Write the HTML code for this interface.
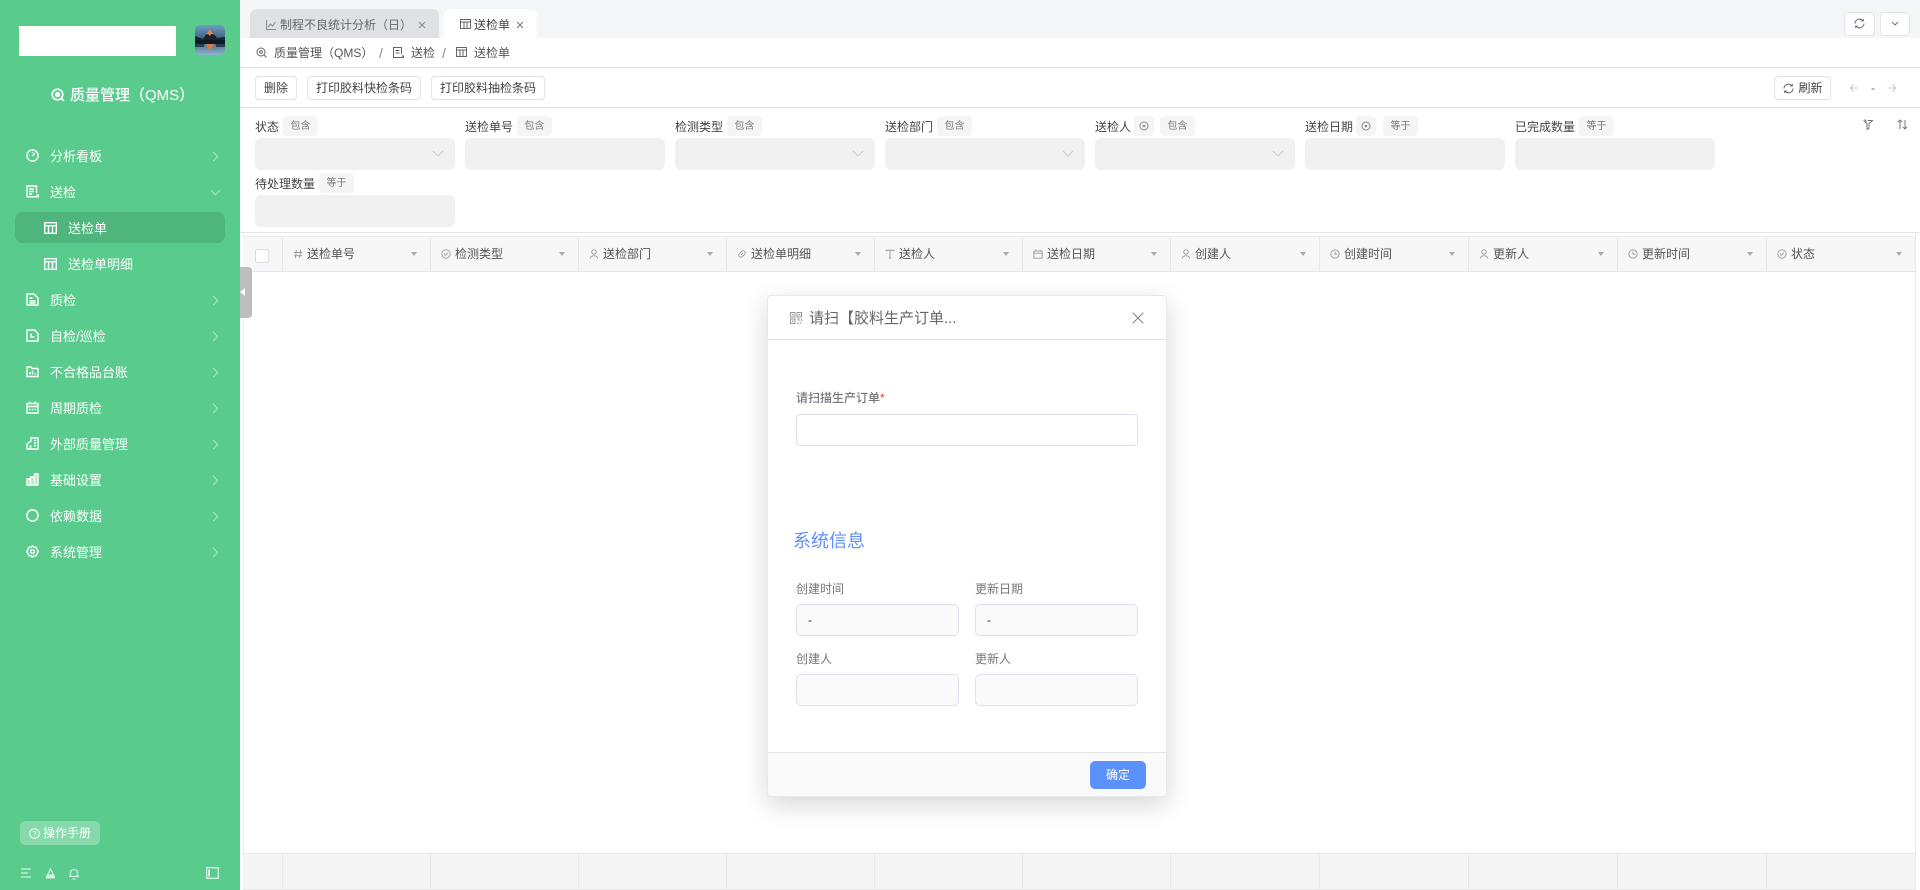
<!DOCTYPE html>
<html lang="zh"><head><meta charset="utf-8"><title>送检单</title>
<style>
*{box-sizing:border-box}
html,body{margin:0;padding:0;width:1920px;height:890px;overflow:hidden;background:#fff;font-family:"Liberation Sans","Noto Sans CJK SC",sans-serif;font-size:12px;color:#444}
.a,.t,svg.i,.c,.btn,.inp,.tag,.d{position:absolute}
.t{line-height:20px;height:20px;white-space:nowrap}
.m{color:#fff;font-size:13px;left:50px}
.s{color:#fff;font-size:13px;left:68px}
.c{left:210px;width:7px;height:7px;border-top:1.4px solid rgba(255,255,255,.5);border-right:1.4px solid rgba(255,255,255,.5);transform:rotate(45deg)}
.btn{background:#fff;border:1px solid #e2e2ea;border-radius:4px;height:24px;line-height:22px;text-align:center;color:#444;font-size:12px}
.tag{height:20px;line-height:22px;background:#f5f5f5;border-radius:4px;text-align:center;color:#777;font-size:10px;width:35px}
.inp{background:#f1f1f1;border-radius:6px;width:200px;height:32px}
.l{font-size:12px;color:#444;margin-top:1px}
.h{position:absolute;top:236px;height:36px;background:#f7f7f7;border-right:1px solid #e8e8e8;border-bottom:1px solid #e8e8e8;border-top:1px solid #ececec}
.h b{position:absolute;right:13px;top:15px;width:0;height:0;border-left:3.5px solid transparent;border-right:3.5px solid transparent;border-top:4px solid #aaa}
.h span{position:absolute;left:24px;top:7px;line-height:20px;font-size:12px;color:#555;font-weight:400;white-space:nowrap}
.h svg{position:absolute;left:10px;top:12px;width:10px;height:10px;fill:none;stroke:#999;stroke-width:1.1}
.f{position:absolute;top:853px;height:37px;background:#f5f5f5;border-right:1px solid #e8e8e8;border-top:1px solid #e8e8e8;border-bottom:1px solid #e8e8e8}
.g{font-size:12px;color:#777}
.fi{position:absolute;background:#fafafa;border:1px solid #e0e0ea;border-radius:5px;width:163px;height:32px;line-height:30px;padding-left:11px;color:#333}
svg.i{fill:none;stroke:#fff;stroke-width:1.2}
</style></head><body>

<!-- sidebar -->
<div class="a" style="left:0;top:0;width:240px;height:890px;background:#59cb8c"></div>
<div class="a" style="left:19px;top:26px;width:157px;height:30px;background:#fff"></div>
<svg class="a" style="left:195px;top:25px" width="30" height="30" viewBox="0 0 30 30"><defs><clipPath id="cp"><rect width="30" height="30" rx="5"/></clipPath><linearGradient id="sky" x1="0" y1="0" x2="0" y2="1"><stop offset="0" stop-color="#6f9fc4"/><stop offset=".5" stop-color="#3a5b78"/><stop offset="1" stop-color="#8fb4cf"/></linearGradient></defs><g clip-path="url(#cp)"><rect width="30" height="30" fill="url(#sky)"/><path d="M0 11L8 14 15 4 22 13 30 12V16H0Z" fill="#14242f"/><path d="M11 9.5L15 4 19 9.5 16 9 15 11 13 9Z" fill="#e9854f"/><rect y="15" width="30" height="4" fill="#0e1a24"/><path d="M11 19L19 19 15 26Z" fill="#d97a46"/><rect y="19" x="0" width="9" height="3" fill="#2a3f50"/><rect y="19" x="21" width="9" height="3" fill="#2a3f50"/></g></svg>

<svg class="i" style="left:51px;top:88px;stroke-width:1.6" width="14" height="14" viewBox="0 0 14 14"><circle cx="6.5" cy="6.5" r="5.3"/><circle cx="6.5" cy="6.5" r="1.8" fill="#fff"/><path d="M10.5 10.5L13 13"/></svg>
<div class="t" style="left:70px;top:86px;color:#fff;font-size:15px;font-weight:500">质量管理（QMS）</div>

<svg class="i" style="left:26px;top:149px;stroke-width:1.4" width="13" height="13" viewBox="0 0 13 13"><circle cx="6.5" cy="6.5" r="5.6"/><path d="M6.5 7L9 4M3.2 6.5H4M6.5 3V3.8"/></svg>
<div class="t m" style="top:147px">分析看板</div><div class="c" style="top:153px"></div>

<svg class="i" style="left:26px;top:185px;stroke-width:1.4" width="13" height="13" viewBox="0 0 13 13"><path d="M10.5 11.8H1V1h9.5V8M3 4H8M3 6.5H8M3 9H6M10.5 10H12.5V11.8H10.5"/></svg>
<div class="t m" style="top:183px">送检</div><div class="c" style="top:187px;left:212px;transform:rotate(135deg)"></div>

<div class="a" style="left:15px;top:212px;width:210px;height:31px;background:#4eb57d;border-radius:8px"></div>
<svg class="i" style="left:44px;top:222px;stroke-width:1.4" width="13" height="12" viewBox="0 0 13 12"><path d="M.7.7H12.3V11.3H.7ZM.7 3.7H12.3M4.5 3.7V11.3M8.5 3.7V11.3"/></svg>
<div class="t s" style="top:219px">送检单</div>
<svg class="i" style="left:44px;top:258px;stroke-width:1.4" width="13" height="12" viewBox="0 0 13 12"><path d="M.7.7H12.3V11.3H.7ZM.7 3.7H12.3M4.5 3.7V11.3M8.5 3.7V11.3"/></svg>
<div class="t s" style="top:255px">送检单明细</div>

<svg class="i" style="left:26px;top:293px;stroke-width:1.4" width="13" height="13" viewBox="0 0 13 13"><path d="M1 1H8L12 5V12H1ZM3.5 5H6.5M3.5 8H9.5M3.5 10H9.5"/></svg>
<div class="t m" style="top:291px">质检</div><div class="c" style="top:297px"></div>

<svg class="i" style="left:26px;top:329px;stroke-width:1.4" width="13" height="13" viewBox="0 0 13 13"><path d="M1 1H8.5L12 4.5V12H1ZM5 4.5V8H8.5"/></svg>
<div class="t m" style="top:327px">自检/巡检</div><div class="c" style="top:333px"></div>

<svg class="i" style="left:26px;top:365px;stroke-width:1.4" width="13" height="13" viewBox="0 0 13 13"><path d="M1 2H5L6 3.5H12V11.5H1ZM4 9.5V7M6.5 9.5V5.5M9 9.5V8"/></svg>
<div class="t m" style="top:363px">不合格品台账</div><div class="c" style="top:369px"></div>

<svg class="i" style="left:26px;top:401px;stroke-width:1.4" width="13" height="13" viewBox="0 0 13 13"><path d="M1 2.5H12V12H1ZM1 5.5H12M4 .5V3.5M9 .5V3.5M3 8.5H4.5M5.8 8.5H7.3M8.6 8.5H10"/></svg>
<div class="t m" style="top:399px">周期质检</div><div class="c" style="top:405px"></div>

<svg class="i" style="left:26px;top:437px;stroke-width:1.4" width="13" height="13" viewBox="0 0 13 13"><path d="M5 1H12V12H1V7L5 4ZM3.5 9H5.5M3.5 11H5.5M8 3.5H10M8 6H10M8 8.5H10"/></svg>
<div class="t m" style="top:435px">外部质量管理</div><div class="c" style="top:441px"></div>

<svg class="i" style="left:26px;top:473px;stroke-width:1.4" width="13" height="13" viewBox="0 0 13 13"><path d="M1 6H4.5V12H1ZM4.5 4H8.5V12H4.5ZM8.5 1H12V12H8.5Z" fill="rgba(255,255,255,.55)"/></svg>
<div class="t m" style="top:471px">基础设置</div><div class="c" style="top:477px"></div>

<svg class="i" style="left:26px;top:509px;stroke-width:1.5" width="13" height="13" viewBox="0 0 13 13"><circle cx="6.5" cy="6.5" r="5.6"/></svg>
<div class="t m" style="top:507px">依赖数据</div><div class="c" style="top:513px"></div>

<svg class="i" style="left:26px;top:545px;stroke-width:1.4" width="13" height="13" viewBox="0 0 13 13"><path d="M6.5.8L8 2.3H10.3L10.9 4.5 12.4 6.5 10.9 8.5 10.3 10.7H8L6.5 12.2 5 10.7H2.7L2.1 8.5.6 6.5 2.1 4.5 2.7 2.3H5Z"/><circle cx="6.5" cy="6.5" r="1.9"/></svg>
<div class="t m" style="top:543px">系统管理</div><div class="c" style="top:549px"></div>

<div class="a" style="left:20px;top:821px;width:80px;height:24px;background:rgba(255,255,255,.28);border-radius:5px"></div>
<svg class="i" style="left:29px;top:828px;opacity:.75" width="11" height="11" viewBox="0 0 11 11"><circle cx="5.5" cy="5.5" r="4.8"/><path d="M4.2 4.2C4.4 2.8 6.8 2.8 6.8 4.4 6.8 5.4 5.5 5.4 5.5 6.5M5.5 7.6V8.5"/></svg>
<div class="t" style="left:43px;top:823px;color:#fff;font-size:12px">操作手册</div>

<svg class="i" style="left:21px;top:868px;opacity:.75" width="11" height="10" viewBox="0 0 11 10"><path d="M0 1H10M0 5H7M0 9H10"/></svg>
<svg class="i" style="left:45px;top:868px;opacity:.75" width="11" height="11" viewBox="0 0 11 11"><path d="M5.5 1L8.5 7H2.5Z"/><path d="M1 7.5H10V10.5H1Z" fill="#fff" stroke="none"/></svg>
<svg class="i" style="left:68px;top:867px;opacity:.75" width="12" height="13" viewBox="0 0 12 13"><path d="M1 9.5H11M2.5 9.5V5.5C2.5 1.5 9.5 1.5 9.5 5.5V9.5M4.5 12H7.5"/></svg>
<svg class="i" style="left:206px;top:867px;opacity:.75;stroke-width:1.3" width="13" height="12" viewBox="0 0 13 12"><path d="M.7.7H12.3V11.3H.7Z"/><path d="M3 2.5V9.5" stroke-width="2"/></svg>

<!-- tab bar -->
<div class="a" style="left:240px;top:0;width:1680px;height:38px;background:#f5f6f8"></div>
<div class="a" style="left:250px;top:9px;width:189px;height:29px;background:#e0e1e4;border-radius:7px 7px 0 0"></div>
<svg class="i" style="left:266px;top:20px;stroke:#888;stroke-width:1" width="10" height="10" viewBox="0 0 10 10"><path d="M.5 0V9.5H10M2 7L4.5 4 6.5 6 9.5 2"/></svg>
<div class="t" style="left:280px;top:15px;color:#666;font-size:12px">制程不良统计分析（日）</div>
<svg class="i" style="left:418px;top:21px;stroke:#888;stroke-width:1" width="8" height="8" viewBox="0 0 8 8"><path d="M1 1L7 7M7 1L1 7"/></svg>
<div class="a" style="left:444px;top:9px;width:93px;height:29px;background:#fff;border-radius:7px 7px 0 0"></div>
<svg class="i" style="left:460px;top:19px;stroke:#666;stroke-width:1" width="11" height="10" viewBox="0 0 11 10"><path d="M.5.5H10.5V9.5H.5ZM.5 3H10.5M4 3V9.5M7 3V9.5"/></svg>
<div class="t" style="left:474px;top:15px;color:#444;font-size:12px">送检单</div>
<svg class="i" style="left:516px;top:21px;stroke:#777;stroke-width:1" width="8" height="8" viewBox="0 0 8 8"><path d="M1 1L7 7M7 1L1 7"/></svg>
<div class="btn" style="left:1844px;top:12px;width:31px;height:24px"></div>
<svg class="i" style="left:1854px;top:18px;stroke:#777;stroke-width:1.1" width="11" height="11" viewBox="0 0 11 11"><path d="M1 5.5A4.5 4.5 0 0 1 9 2.8M10 5.5A4.5 4.5 0 0 1 2 8.2M9.3 1V3H7.3M1.7 10V8H3.7"/></svg>
<div class="btn" style="left:1880px;top:12px;width:30px;height:24px"></div>
<svg class="i" style="left:1891px;top:21px;stroke:#777;stroke-width:1.1" width="8" height="6" viewBox="0 0 8 6"><path d="M1 1L4 4 7 1"/></svg>

<!-- breadcrumb -->
<svg class="i" style="left:256px;top:47px;stroke:#666;stroke-width:1" width="11" height="11" viewBox="0 0 11 11"><circle cx="5" cy="5" r="4"/><circle cx="5" cy="5" r="1.4"/><path d="M8 8L10.5 10.5"/></svg>
<div class="t" style="left:274px;top:43px;font-size:12px;color:#555">质量管理（QMS）</div>
<div class="t" style="left:379px;top:43px;font-size:14px;color:#888">/</div>
<svg class="i" style="left:393px;top:47px;stroke:#666;stroke-width:1" width="11" height="11" viewBox="0 0 11 11"><path d="M8.5 10.5H.5V.5H8.5V7M2.5 3.5H6.5M2.5 6H6.5M8.5 9H10.5V10.5H8.5"/></svg>
<div class="t" style="left:411px;top:43px;font-size:12px;color:#555">送检</div>
<div class="t" style="left:442px;top:43px;font-size:14px;color:#888">/</div>
<svg class="i" style="left:456px;top:47px;stroke:#666;stroke-width:1" width="11" height="10" viewBox="0 0 11 10"><path d="M.5.5H10.5V9.5H.5ZM.5 3H10.5M4 3V9.5M7 3V9.5"/></svg>
<div class="t" style="left:474px;top:43px;font-size:12px;color:#555">送检单</div>
<div class="a" style="left:240px;top:67px;width:1680px;height:1px;background:#e4e4e8"></div>

<!-- toolbar -->
<div class="btn" style="left:255px;top:76px;width:42px">删除</div>
<div class="btn" style="left:307px;top:76px;width:114px">打印胶料快检条码</div>
<div class="btn" style="left:431px;top:76px;width:114px">打印胶料抽检条码</div>
<div class="btn" style="left:1774px;top:76px;width:57px;padding-left:16px">刷新</div>
<svg class="i" style="left:1783px;top:83px;stroke:#666;stroke-width:1" width="11" height="11" viewBox="0 0 11 11"><path d="M1 5.5A4.5 4.5 0 0 1 9 2.8M10 5.5A4.5 4.5 0 0 1 2 8.2M9.3 1V3H7.3M1.7 10V8H3.7"/></svg>
<svg class="i" style="left:1849px;top:83px;stroke:#ccc;stroke-width:1.1" width="10" height="10" viewBox="0 0 10 10"><path d="M9 5H1M4.5 1.5L1 5 4.5 8.5"/></svg>
<div class="t" style="left:1871px;top:78px;color:#666">-</div>
<svg class="i" style="left:1887px;top:83px;stroke:#ccc;stroke-width:1.1" width="10" height="10" viewBox="0 0 10 10"><path d="M1 5H9M5.5 1.5L9 5 5.5 8.5"/></svg>
<div class="a" style="left:240px;top:107px;width:1680px;height:1px;background:#e4e4e8"></div>

<!-- filters row 1 -->
<div class="t l" style="left:255px;top:116px">状态</div><div class="tag" style="left:283px;top:116px">包含</div><div class="inp" style="left:255px;top:138px"></div>
<svg class="i" style="left:432px;top:150px;stroke:#ccc;stroke-width:1" width="12" height="7" viewBox="0 0 12 7"><path d="M1 1L6 6 11 1"/></svg>
<div class="t l" style="left:465px;top:116px">送检单号</div><div class="tag" style="left:517px;top:116px">包含</div><div class="inp" style="left:465px;top:138px"></div>
<div class="t l" style="left:675px;top:116px">检测类型</div><div class="tag" style="left:727px;top:116px">包含</div><div class="inp" style="left:675px;top:138px"></div>
<svg class="i" style="left:852px;top:150px;stroke:#ccc;stroke-width:1" width="12" height="7" viewBox="0 0 12 7"><path d="M1 1L6 6 11 1"/></svg>
<div class="t l" style="left:885px;top:116px">送检部门</div><div class="tag" style="left:937px;top:116px">包含</div><div class="inp" style="left:885px;top:138px"></div>
<svg class="i" style="left:1062px;top:150px;stroke:#ccc;stroke-width:1" width="12" height="7" viewBox="0 0 12 7"><path d="M1 1L6 6 11 1"/></svg>
<div class="t l" style="left:1095px;top:116px">送检人</div><div class="tag" style="left:1134px;top:116px;width:20px"></div>
<svg class="i" style="left:1139px;top:121px;stroke:#888;stroke-width:1" width="10" height="10" viewBox="0 0 10 10"><circle cx="5" cy="5" r="4"/><circle cx="5" cy="5" r=".8" fill="#888"/></svg>
<div class="tag" style="left:1160px;top:116px">包含</div><div class="inp" style="left:1095px;top:138px"></div>
<svg class="i" style="left:1272px;top:150px;stroke:#ccc;stroke-width:1" width="12" height="7" viewBox="0 0 12 7"><path d="M1 1L6 6 11 1"/></svg>
<div class="t l" style="left:1305px;top:116px">送检日期</div><div class="tag" style="left:1356px;top:116px;width:20px"></div>
<svg class="i" style="left:1361px;top:121px;stroke:#888;stroke-width:1" width="10" height="10" viewBox="0 0 10 10"><circle cx="5" cy="5" r="4"/><circle cx="5" cy="5" r=".8" fill="#888"/></svg>
<div class="tag" style="left:1383px;top:116px">等于</div><div class="inp" style="left:1305px;top:138px"></div>
<div class="t l" style="left:1515px;top:116px">已完成数量</div><div class="tag" style="left:1579px;top:116px">等于</div><div class="inp" style="left:1515px;top:138px"></div>
<svg class="i" style="left:1863px;top:119px;stroke:#777;stroke-width:1" width="10" height="11" viewBox="0 0 10 11"><path d="M.5 1.5L4 4.5V10.5L6 9.5V4.5L9.5 1.5H4.5M1.5.5L3.5 2.5"/></svg>
<svg class="i" style="left:1897px;top:119px;stroke:#777;stroke-width:1" width="11" height="11" viewBox="0 0 11 11"><path d="M3 10V1M.8 3.2L3 1 5.2 3.2M8 1V10M5.8 7.8L8 10 10.2 7.8"/></svg>
<!-- filters row 2 -->
<div class="t l" style="left:255px;top:173px">待处理数量</div><div class="tag" style="left:319px;top:173px">等于</div><div class="inp" style="left:255px;top:195px"></div>

<div class="a" style="left:240px;top:232px;width:1680px;height:1px;background:#e4e4e4"></div>

<!-- table frame -->
<div class="a" style="left:243px;top:233px;width:1px;height:657px;background:#ececec"></div>
<div class="a" style="left:1915px;top:233px;width:1px;height:657px;background:#ececec"></div>

<!-- table header -->
<div class="h" style="left:243px;width:40px"></div>
<div class="a" style="left:255px;top:249px;width:14px;height:14px;border:1px solid #dcdce4;border-radius:2px;background:#fff"></div>

<div class="h" style="left:283px;width:148px"><svg viewBox="0 0 12 12"><path d="M4 1L3 11M9 1L8 11M1 4.2H11M1 8H11"/></svg><span>送检单号</span><b></b></div>
<div class="h" style="left:431px;width:148px"><svg viewBox="0 0 12 12"><circle cx="6" cy="6" r="5"/><path d="M3.8 6L5.4 7.6 8.2 4.6"/></svg><span>检测类型</span><b></b></div>
<div class="h" style="left:579px;width:148px"><svg viewBox="0 0 12 12"><circle cx="6" cy="3.5" r="2.7"/><path d="M1.5 11.5C1.5 7 10.5 7 10.5 11.5"/></svg><span>送检部门</span><b></b></div>
<div class="h" style="left:727px;width:148px"><svg viewBox="0 0 12 12"><path d="M5 7L7 5M4 4.5L5.5 3C8 .5 11.5 4 9 6.5L7.5 8M8 7.5L6.5 9C4 11.5.5 8 3 5.5L4.5 4"/></svg><span>送检单明细</span><b></b></div>
<div class="h" style="left:875px;width:148px"><svg viewBox="0 0 12 12"><path d="M1.5 3V1.5H10.5V3M6 1.5V11M4.5 11H7.5"/></svg><span>送检人</span><b></b></div>
<div class="h" style="left:1023px;width:148px"><svg viewBox="0 0 12 12"><path d="M1 2.5H11V11H1ZM1 5H11M3.5 .5V3M8.5 .5V3"/></svg><span>送检日期</span><b></b></div>
<div class="h" style="left:1171px;width:149px"><svg viewBox="0 0 12 12"><circle cx="6" cy="3.5" r="2.7"/><path d="M1.5 11.5C1.5 7 10.5 7 10.5 11.5"/></svg><span>创建人</span><b></b></div>
<div class="h" style="left:1320px;width:149px"><svg viewBox="0 0 12 12"><circle cx="6" cy="6" r="5"/><path d="M6 2.8V6.2H8.8"/></svg><span>创建时间</span><b></b></div>
<div class="h" style="left:1469px;width:149px"><svg viewBox="0 0 12 12"><circle cx="6" cy="3.5" r="2.7"/><path d="M1.5 11.5C1.5 7 10.5 7 10.5 11.5"/></svg><span>更新人</span><b></b></div>
<div class="h" style="left:1618px;width:149px"><svg viewBox="0 0 12 12"><circle cx="6" cy="6" r="5"/><path d="M6 2.8V6.2H8.8"/></svg><span>更新时间</span><b></b></div>
<div class="h" style="left:1767px;width:149px"><svg viewBox="0 0 12 12"><circle cx="6" cy="6" r="5"/><path d="M3.8 6L5.4 7.6 8.2 4.6"/></svg><span>状态</span><b></b></div>

<!-- table footer -->
<div class="f" style="left:243px;width:40px"></div>
<div class="f" style="left:283px;width:148px"></div>
<div class="f" style="left:431px;width:148px"></div>
<div class="f" style="left:579px;width:148px"></div>
<div class="f" style="left:727px;width:148px"></div>
<div class="f" style="left:875px;width:148px"></div>
<div class="f" style="left:1023px;width:148px"></div>
<div class="f" style="left:1171px;width:149px"></div>
<div class="f" style="left:1320px;width:149px"></div>
<div class="f" style="left:1469px;width:149px"></div>
<div class="f" style="left:1618px;width:149px"></div>
<div class="f" style="left:1767px;width:149px"></div>

<!-- collapse handle -->
<div class="a" style="left:240px;top:267px;width:12px;height:51px;background:#bdbdbd;border-radius:0 4px 4px 0"></div>
<div class="a" style="left:240px;top:288px;width:0;height:0;border-top:4px solid transparent;border-bottom:4px solid transparent;border-right:5px solid #fff"></div>

<!-- dialog -->
<div class="a" style="left:767px;top:295px;width:400px;height:502px;background:#fff;border-radius:4px;border:1px solid #e8e8ec;box-shadow:0 8px 26px rgba(0,0,0,.16)"></div>
<svg class="i" style="left:790px;top:312px;stroke:#999;stroke-width:1" width="12" height="12" viewBox="0 0 12 12"><path d="M.5.5H5V5H.5ZM7 .5H11.5V5H7ZM.5 7H5V11.5H.5ZM7 7H9V9M11.5 7V9M7 11.5H8.5M10 10.5L11.5 11.5"/><path d="M2 2H3.5V3.5H2ZM8.5 2H10V3.5H8.5ZM2 8.5H3.5V10H2Z" fill="#999" stroke="none"/></svg>
<div class="t" style="left:809px;top:309px;font-size:15px;color:#666">请扫【胶料生产订单...</div>
<svg class="i" style="left:1132px;top:312px;stroke:#777;stroke-width:1" width="12" height="12" viewBox="0 0 12 12"><path d="M.7.7L11.3 11.3M11.3.7L.7 11.3"/></svg>
<div class="a" style="left:768px;top:339px;width:398px;height:1px;background:#e4e4e8"></div>
<div class="t g" style="left:796px;top:388px;font-weight:500">请扫描生产订单<span style="color:#f33">*</span></div>
<div class="a" style="left:796px;top:414px;width:342px;height:32px;border:1px solid #e0e0ea;border-radius:4px;background:#fff"></div>
<div class="t" style="left:793px;top:531px;font-size:18px;color:#5c8ffc">系统信息</div>
<div class="t g" style="left:796px;top:579px">创建时间</div>
<div class="t g" style="left:975px;top:579px">更新日期</div>
<div class="fi" style="left:796px;top:604px">-</div>
<div class="fi" style="left:975px;top:604px">-</div>
<div class="t g" style="left:796px;top:649px">创建人</div>
<div class="t g" style="left:975px;top:649px">更新人</div>
<div class="fi" style="left:796px;top:674px"></div>
<div class="fi" style="left:975px;top:674px"></div>
<div class="a" style="left:768px;top:752px;width:398px;height:44px;background:#fafafa;border-top:1px solid #e4e4e8;border-radius:0 0 4px 4px"></div>
<div class="a" style="left:1090px;top:761px;width:56px;height:28px;line-height:28px;background:#5b91fd;border-radius:5px;text-align:center;color:#fff;font-size:12px">确定</div>

</body></html>
